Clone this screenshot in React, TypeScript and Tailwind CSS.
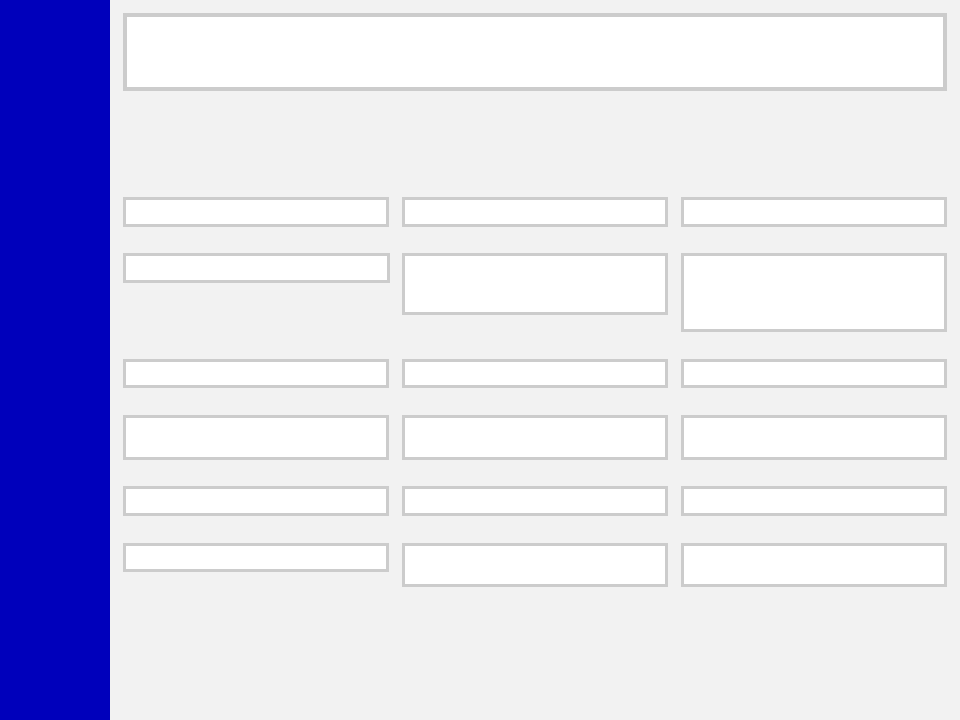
export default function App() {
  // heights of each field, row by row (col1, col2, col3)
  const rows = [
    { mt: "mt-[106px]", cells: ["h-[30px]", "h-[30px]", "h-[30px]"] },
    { mt: "mt-[26px]", cells: ["h-[30px] mr-[-1px]", "h-[62px]", "h-[79px]"] },
    { mt: "mt-[27px]", cells: ["h-[29px]", "h-[29px]", "h-[29px]"] },
    { mt: "mt-[27px]", cells: ["h-[45px]", "h-[45px]", "h-[45px]"] },
    { mt: "mt-[26px]", cells: ["h-[30px]", "h-[30px]", "h-[30px]"] },
    { mt: "mt-[27px]", cells: ["h-[29px]", "h-[44px]", "h-[44px]"] },
  ];

  return (
    <div className="flex min-h-[720px] w-full bg-[#f2f2f2]" style={{ fontFamily: "Liberation Sans, sans-serif" }}>
      <aside className="w-[110px] shrink-0 bg-[#0000bb]" />

      <main className="flex-1 px-[13px] pt-[13px]">
        <div className="h-[78px] border-4 border-[#cccccc] bg-white" />

        {rows.map((row, i) => (
          <div key={i} className={`grid grid-cols-3 items-start gap-x-[13px] ${row.mt}`}>
            {row.cells.map((h, j) => (
              <div key={j} className={`border-[3px] border-[#cccccc] bg-white ${h}`} />
            ))}
          </div>
        ))}
      </main>
    </div>
  );
}
